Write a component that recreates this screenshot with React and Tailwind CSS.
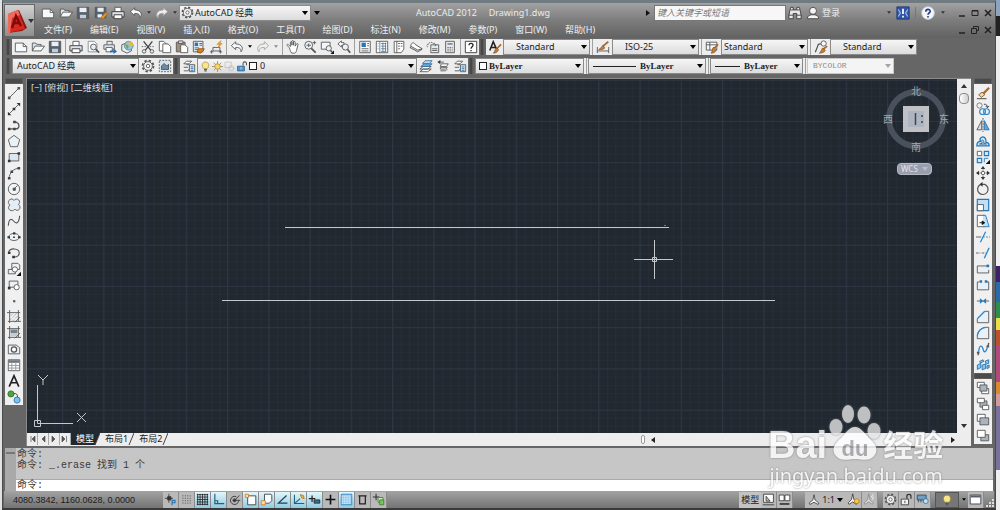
import React, { useState } from "react";

const icons = {
  new: (
    <>
      <path d="M1.5 3.5h9l4 4v6h-13z" fill="#f7fafd" />
      <path d="M10.5 3.5v4h4" />
    </>
  ),
  open: (
    <>
      <path d="M1.5 12.5v-9h4l1 1.500h5v2" fill="#dde6ee" />
      <path d="M1.500 12.500l3-5.500h11l-4 5.500z" fill="#f4f8fb" />
    </>
  ),
  save: (
    <>
      <path d="M1.500 1.500h13v13h-13z" fill="#56616e" />
      <path d="M4 2h8v5H4z" fill="#e9eff5" stroke="none" />
      <path d="M4.500 10h7v4h-7z" fill="#c3cdd8" stroke="none" />
    </>
  ),
  saveas: (
    <>
      <path d="M1.500 1.500h12v12h-12z" fill="#56616e" />
      <path d="M4 2h7v4.500H4zM4 9.500h5v3.500H4z" fill="#e9eff5" stroke="none" />
      <path d="M14 7l-5 5-1 3 3-1 4-5z" fill="#f0a030" stroke="#b06a10" />
    </>
  ),
  print: (
    <>
      <path d="M4.500 6V1.500h7V6" fill="#fff" />
      <path d="M1 6.500h14v6H1z" fill="#dfe3e7" stroke="#333" />
      <path d="M3.500 10h9v4.500h-9z" fill="#fff" stroke="#333" />
    </>
  ),
  undo: <path d="M6.500 2L1.500 6.500 6.500 11V8.500c5 0 6 1.500 6 5 3-3 2-9-6-9z" fill="#f8fafb" />,
  redo: (
    <path d="M9.500 2L14.500 6.500 9.500 11V8.500c-5 0-6 1.500-6 5-3-3-2-9 6-9z" fill="#eee" stroke="#a2a2a2" />
  ),
  preview: (
    <>
      <path d="M2.500 1.500h7l3 3v9h-10z" fill="#f7fafd" stroke="#888" />
      <circle cx="8.500" cy="8" r="3.300" fill="#e3eef7" />
      <path d="M11 10.500l4 4" strokeWidth="2" />
    </>
  ),
  publish: (
    <>
      <path d="M4.500 5V1.500h6V5M1 5.500h12v5H1z" fill="#e4e8ec" />
      <path d="M3.500 8.500h7v5h-7z" fill="#fff" />
      <path d="M8 12h4V9.500l4 3.500-4 3V14H8z" fill="#1f6db5" stroke="none" />
    </>
  ),
  globe: (
    <>
      <path d="M2 5.500L8 3l5 2.500v7L8 15l-6-3z" fill="#e9eef2" />
      <circle cx="10" cy="6.500" r="5" fill="#8cc6e6" stroke="#77808a" />
      <path d="M10 1.500c3 0 5 2 5 5l-5 1z" fill="#e8b93c" stroke="none" />
      <path d="M6 4l4 3-2 4z" fill="#6da84c" stroke="none" />
    </>
  ),
  cut: (
    <>
      <path d="M3 1.500l8 10M13 1.500l-8 10" stroke="#444" strokeWidth="1.500" />
      <circle cx="3.500" cy="13" r="2" />
      <circle cx="12.500" cy="13" r="2" />
      <path d="M1 7.500h14" strokeDasharray="1.500 1.500" />
    </>
  ),
  copy: (
    <>
      <path d="M1.500 1.500h5l3 3v8h-8z" fill="#fff" />
      <path d="M5.500 4.500h6l3 3v7h-9z" fill="#fff" />
    </>
  ),
  paste: (
    <>
      <path d="M1.500 2.500h10v11h-10z" fill="#a08f78" />
      <path d="M4 1h5v3H4z" fill="#ddd" />
      <path d="M6.500 5.500h5l3 3v6h-8z" fill="#fff" />
    </>
  ),
  match: (
    <>
      <path d="M1.500 1.500h11v12h-11z" fill="#e8f0f7" />
      <path d="M3 3h4v4H3z" fill="#2976b6" stroke="none" />
      <path d="M8.500 4h3M8.500 6h3M3 9h5M3 11h4" />
      <path d="M7 10h7l-1 2-3 3-4-1z" fill="#d8821f" stroke="#8d5213" />
    </>
  ),
  block: (
    <>
      <path d="M4.500 8.500h8v4h-8z" fill="#e7edf2" />
      <path d="M1 13.500h4M3 11.500v4M11 13.500h4M13 11.500v4" />
      <path d="M13 1l-4 4h3l-2 4 5-5h-3l2-3z" fill="#f5a623" stroke="#c47e12" strokeWidth="0.600" />
    </>
  ),
  hand: (
    <path
      d="M4 9L1.500 6.500c-1-2 1-2 2-.5L5 7.500V3c0-1.500 1.700-1.500 1.700 0v3-4.500c0-1.300 1.800-1.300 1.800 0V6l.3-3.500c.2-1.300 1.800-1 1.700.3L10.500 7l1.500-2.500c.8-1 2.200-.4 1.700.8L12 12c-.5 2-1 2.500-2 3H6.500C5 13 4.500 11 4 9z"
      fill="#fff"
    />
  ),
  zoomrt: (
    <>
      <circle cx="6.500" cy="6" r="4.500" fill="#e8f1f8" />
      <path d="M9.500 9.500l5 5" strokeWidth="2" />
      <path d="M4 6h5M6.500 4v4M11 3h4M13 1v4" />
    </>
  ),
  zoomwin: (
    <>
      <path d="M1.500 2.500h10v8h-10z" fill="#f3f7fa" />
      <circle cx="10" cy="9.500" r="3" fill="#e8f1f8" />
      <path d="M12 12l2 2" strokeWidth="2" />
      <path d="M16 12v4h-4z" fill="#111" stroke="none" />
    </>
  ),
  zoomprev: (
    <>
      <path d="M5 1L1 4.500 5 8V6h3V3H5z" fill="#fff" />
      <circle cx="9.500" cy="8" r="3.500" fill="#e8f1f8" />
      <path d="M12 10.500l3 4" strokeWidth="2" />
    </>
  ),
  props: (
    <>
      <path d="M2 1.500h12v13H2z" fill="#fff" />
      <path d="M4 3h5v5H4z" fill="#2976b6" stroke="none" />
      <path d="M10.500 4h2M10.500 6.500h2M4 10h8M4 12.500h8" />
    </>
  ),
  design: (
    <>
      <path d="M1.500 1.500h13v13h-13z" fill="#fff" />
      <path d="M5.500 1.500v13M7 4h6M7 7h6M7 10h6M7 13h6M9 3v10M12 3v10M3 4h1M3 7h1M3 10h1" stroke="#5d7c98" />
    </>
  ),
  palette: (
    <>
      <path d="M2.500 1.500h11v9l-3 4h-8z" fill="#fff" />
      <path d="M5.500 1.500v13M7 4h2M10 4h2M7 7h2M10 7h2M7 10h2" />
    </>
  ),
  sheet: (
    <>
      <path d="M1 8.500l9 5 5-3-9-5z" fill="#cfd7de" />
      <path d="M2 7c0-4 4-5 5-2l8 5-5 1.500z" fill="#fff" />
    </>
  ),
  markup: (
    <>
      <path d="M5.500 5.500h9v9h-9z" fill="#e5ebf0" />
      <path d="M2 8c-2-1-1-4 1-3 0-3 4-3 5-1 3-1 4 2 2 4" strokeDasharray="2 1" />
      <path d="M7 10h6M7 12h6" />
    </>
  ),
  calc: (
    <>
      <path d="M3 1.500h10v13H3z" fill="#e8ecef" />
      <path d="M5 3.500h6v2H5z" fill="#808b95" stroke="none" />
      <path d="M5 8.500h6M5 10.500h6M5 12.500h6" strokeDasharray="1.500 1" />
    </>
  ),
  help: (
    <>
      <path d="M1.500 1.500h13v13h-13z" fill="#fff" stroke="#333" />
      <path d="M5.700 6c0-3 4.600-3 4.600 0C10.300 7.500 8 8 8 10M8 11.300v1.500" stroke="#222" strokeWidth="1.500" />
    </>
  ),
  textstyle: (
    <>
      <path d="M2 12L6 2l4 9M3.500 8.500h5" stroke="#222" strokeWidth="1.800" />
      <path d="M15 5l-5 5" stroke="#a9682d" strokeWidth="2" />
      <path d="M10 9l2 2c-1 3-3 4-6 4 2-1 1-4 4-6z" fill="#c77a34" stroke="#7a4b20" strokeWidth="0.700" />
    </>
  ),
  dimstyle: (
    <>
      <path d="M1.500 8v7M14.500 8v7M1.500 12.500h13" />
      <path d="M14 2L8 7" stroke="#a9682d" strokeWidth="2" />
      <path d="M8 6l2 3c-1 2-4 2-7 2 2-1 3-3 5-5z" fill="#c77a34" stroke="#7a4b20" strokeWidth="0.700" />
    </>
  ),
  tablestyle: (
    <>
      <path d="M1.500 2.500h12v9h-12zM1.500 5.500h12M5.500 2.500v9" fill="#f6f8fa" />
      <path d="M15 5l-5 5" stroke="#a9682d" strokeWidth="2" />
      <path d="M10 8l3 3c-1 3-3 4-6 4 2-1 0-5 3-7z" fill="#c77a34" stroke="#7a4b20" strokeWidth="0.700" />
    </>
  ),
  leader: (
    <>
      <path d="M1.500 14L5 5l4-1" strokeWidth="1.400" />
      <circle cx="11" cy="4" r="3" fill="#f6f8fa" />
      <path d="M15 7l-5 4" stroke="#a9682d" strokeWidth="2" />
      <path d="M10 9l3 3c-1 2-4 3-7 3 2-1 2-4 4-6z" fill="#c77a34" stroke="#7a4b20" strokeWidth="0.700" />
    </>
  ),
  gear: (
    <>
      <circle cx="8" cy="8" r="6.300" strokeWidth="2" strokeDasharray="2.700 2.250" />
      <circle cx="8" cy="8" r="5" fill="#f3f3f3" />
      <circle cx="8" cy="8" r="2" fill="#fff" />
    </>
  ),
  geardash: (
    <>
      <path d="M1.500 1.500h13v13h-13z" strokeDasharray="2 1.500" fill="#d5e2ec" />
      <path d="M4 12V8l3-3 3 3 2-2v6z" fill="#6c8aa3" />
    </>
  ),
  layers: (
    <>
      <path d="M5 2.500h6l-3 3H2zM5 6.500h3M2 9.500h5M2 13.500h5l1-2" fill="#fff" />
      <path d="M8.500 6.500h6v8h-6z" fill="#d8e6f2" />
      <path d="M10 9h3M10 11h3M10 13h3" stroke="#2976b6" />
    </>
  ),
  layerprev: (
    <>
      <path d="M1 14.500l4-3h9l-4 3zM1 11.500l4-3h9l-4 3z" fill="#fff" />
      <path d="M2 8.500l4-3h9l-4 3z" fill="#6cb0e0" stroke="#2f6da0" />
      <path d="M4 5l3-3h8l-3 3z" fill="#d4e7f5" stroke="#2f6da0" />
    </>
  ),
  layerback: (
    <>
      <path d="M6 5.500h8l-2 3H5zM5 9.500h8l-2 2H5zM5 13.500h6l2-2" fill="#fff" />
      <path d="M5 1L1.500 3.500 5 6z" fill="#333" stroke="none" />
      <path d="M4 3.500h5" />
    </>
  ),
  bulb: (
    <>
      <path d="M5.500 11C2 8 2.500 1.500 8 1.500S14 8 10.500 11z" fill="#fbe58b" stroke="#9b8740" />
      <path d="M6 12.500h4M6.500 14.500h3" strokeWidth="1.600" />
    </>
  ),
  sun: (
    <>
      <path d="M8 0v16M0 8h16M2.500 2.500l11 11M13.500 2.500l-11 11" stroke="#8c7c45" />
      <circle cx="8" cy="8" r="4" fill="#fbd75c" stroke="#9b8330" />
    </>
  ),
  vpfreeze: (
    <>
      <path d="M1.500 1.500h9v8h-9z" stroke="#bbb" />
      <circle cx="10.500" cy="10.500" r="3.500" stroke="#c2c2c2" strokeWidth="2" strokeDasharray="2 1" />
    </>
  ),
  unlock: (
    <>
      <path d="M9.500 7V3.500c0-3 5-3 5 0V6" strokeWidth="1.500" />
      <path d="M1.500 7.500h10v7h-10z" fill="#4c95cf" stroke="#235a87" />
      <path d="M6.500 9v3" stroke="#fff" />
    </>
  ),
  binoculars: (
    <>
      <path d="M3 1.500h3v3h4v-3h3l2 9v4h-5v-6H6v6H1v-4z" fill="#e9e9e9" stroke="#3a3a3a" />
      <path d="M1 10.500h5M10 10.500h5M3 4.500h3M10 4.500h3" stroke="#3a3a3a" />
    </>
  ),
  user: (
    <>
      <path d="M1.500 14.500c0-3 2-4 5-4.500h3c3 .5 5 1.500 5 4.500z" fill="#f5f5f5" stroke="#444" />
      <circle cx="8" cy="5.500" r="4" fill="#f5f5f5" stroke="#444" />
    </>
  ),
  exchange: (
    <>
      <path d="M1 1h14v14H1z" fill="#2f56a5" stroke="#1d3a78" />
      <path d="M2.500 4l2.500 4-2.500 4M13.500 4L11 8l2.500 4" stroke="#9fb6e6" strokeWidth="1.500" />
      <path d="M8 3v6M8 11v2" stroke="#fff" strokeWidth="2" />
    </>
  ),
  helpround: (
    <>
      <circle cx="8" cy="8" r="7.300" fill="#f6f6f6" stroke="#b9c4d8" />
      <path d="M5.500 6.500c0-3.500 5-3.500 5-.5C10.500 8 8 8 8 10M8 11.500V13" stroke="#24418f" strokeWidth="1.900" />
    </>
  ),
  line: (
    <>
      <path d="M2.500 13.500l11-11" />
      <path d="M1 12h3v3H1zM12 1h3v3h-3z" fill="#555" stroke="none" />
    </>
  ),
  xline: (
    <>
      <path d="M2 14L14 2" />
      <path d="M1 11v4h4zM15 5V1h-4zM6.500 6.500h3v3h-3z" fill="#333" stroke="none" />
    </>
  ),
  pline: (
    <>
      <path d="M2 12.500h8c5 0 5-7-1-8" strokeWidth="1.500" />
      <path d="M1 11h3v3H1zM7 11h3v3H7zM7 3h3v3H7z" fill="#444" stroke="none" />
    </>
  ),
  polygon: <path d="M8 1.500l6.500 5-2.500 8H4L1.500 6.500z" fill="#eaf2f8" />,
  rect: (
    <>
      <path d="M2.500 4h11v8.500h-11z" fill="#dbe8f2" />
      <path d="M1 11h3v3H1zM12 2.500h3v3h-3z" fill="#333" stroke="none" />
    </>
  ),
  arc: (
    <>
      <path d="M2.500 14c0-6 5-11 11-11.500" />
      <path d="M1 12.500h3v3H1zM4 5h3v3H4zM12 1h3v3h-3z" fill="#444" stroke="none" />
    </>
  ),
  circle: (
    <>
      <circle cx="8" cy="8" r="6.500" fill="#f0f5f9" />
      <path d="M8 8l4-4M7 7h2.500v2.500H7z" fill="#444" />
    </>
  ),
  cloud: (
    <path
      d="M3 2c2-1.500 4-1 5 .8 1-2 4-2 5.500-.5 1.500 1.500 1 4-.5 5.200 2 1 2.500 4 1 5.500s-4 1.500-5-.3c-1.500 2-4 2.500-6 1-2-1.500-1.500-4.500.5-5.700C1 7 1 3.500 3 2z"
      fill="#e5eef5"
    />
  ),
  spline: <path d="M1.500 13.500C2 5 5 5 7.500 8s6 4 7-6" strokeWidth="1.300" />,
  ellipse: (
    <>
      <ellipse cx="8" cy="8" rx="6" ry="4" fill="#eef4f8" />
      <path d="M0.500 7h3v2.500h-3zM12.500 7h3v2.500h-3zM7 2.500h2.500V5H7zM7 7.500h2V9H7z" fill="#333" stroke="none" />
    </>
  ),
  ellarc: (
    <>
      <path d="M2 7c1-5 12-5 12 1 0 3-3 5-6 4.500" strokeWidth="1.300" />
      <path d="M1 6.500h3V9H1zM6 11h3v3H6z" fill="#333" stroke="none" />
    </>
  ),
  insert: (
    <>
      <path d="M5.500 1.500h7l2 2v5h-9zM1.500 8.500h8v5h-8z" fill="#eaf1f6" />
      <circle cx="9" cy="8.500" r="3" fill="#fff" />
      <path d="M16 11v5h-5z" fill="#111" stroke="none" />
    </>
  ),
  makeblock: (
    <>
      <path d="M2.500 3.500h10v7h-10z" fill="#eaf1f6" />
      <circle cx="11" cy="10.500" r="3" fill="#fff" />
      <path d="M1 10h3v3H1z" fill="#333" stroke="none" />
    </>
  ),
  point: <path d="M7 7h2.500v2.500H7z" fill="#555" stroke="none" />,
  hatch: (
    <>
      <path d="M3 0v15M13 0v13M0 3h15M1 13h15" />
      <path d="M4 7l3-3M4 11l8-8M7 12l5-5" stroke="#6c8aa3" strokeDasharray="1 1" />
      <path d="M9 14l6-6" />
    </>
  ),
  gradient: (
    <>
      <path d="M3 0v15M13 0v13M0 3h15M1 13h15" />
      <path d="M4 4h8v4H4z" fill="#77828c" stroke="none" />
      <path d="M4 8h8v4H4z" fill="#c3ccd3" stroke="none" />
      <path d="M9 14l6-6" />
    </>
  ),
  region: (
    <>
      <path d="M1.500 3.500h9l4 3v7h-13z" fill="#eaf1f6" />
      <circle cx="8" cy="8.500" r="3" fill="#fff" strokeWidth="1.400" />
    </>
  ),
  table: (
    <>
      <path d="M1.500 2h13v12.500h-13z" fill="#fff" />
      <path d="M2 2.500h12v3H2z" fill="#6c7681" stroke="none" />
      <path d="M1.500 8.500h13M1.500 11.500h13M5.500 5.500v9M10 5.500v9" stroke="#8a94a0" />
    </>
  ),
  mtext: <path d="M2.500 14.500L8 2l5.500 12.500M4.500 10h7" stroke="#222" strokeWidth="1.900" />,
  addsel: (
    <>
      <circle cx="4.500" cy="4.500" r="3.500" fill="#4da33d" stroke="#2f7524" />
      <circle cx="11.500" cy="11.500" r="3.500" fill="#7fc0ee" stroke="#2878b5" />
      <path d="M8 4c3 0 4 1 4 4" stroke="#333" />
    </>
  ),
  erase: (
    <>
      <path d="M15 2L8 9" stroke="#b06a28" strokeWidth="2.500" />
      <path d="M7 7l3 3-4 3-3-3z" fill="#f1d6a8" stroke="#7d5a30" />
      <path d="M1 14.500h11" stroke="#333" />
    </>
  ),
  copyobj: (
    <>
      <circle cx="4" cy="4" r="3" stroke="#777" />
      <circle cx="7.500" cy="11" r="3.300" stroke="#2b86cc" strokeWidth="1.300" />
      <circle cx="12" cy="11" r="3.300" stroke="#2b86cc" strokeWidth="1.300" />
      <path d="M9 2.500c3 0 4 1 4 4M11 4.500l2 2 2-2" stroke="#333" />
    </>
  ),
  mirror: (
    <>
      <path d="M6.500 3v10.500H1z" fill="#d8dde2" />
      <path d="M9.500 3v10.500H15z" fill="#5aa9e0" stroke="#2b6ea8" />
      <path d="M8 0v16" stroke="#444" strokeDasharray="2 1" />
    </>
  ),
  offset: (
    <>
      <path
        d="M1 13.500h14c0-3-2-4-3.500-4C12 5 9 2 6 4 4 5 4.500 7 5 8.500 2 8.500 1 11 1 13.500z"
        fill="#d2e7f6"
        stroke="#2577b8"
        strokeWidth="1.500"
      />
      <path d="M4 11.500h8c-1-1-2-.5-3-1 0-3-1-4-2-3.500s0 2 0 3.500z" stroke="#2b5f8d" />
    </>
  ),
  array: (
    <>
      <path d="M1.500 1.500h5v5h-5z" stroke="#555" fill="#fff" />
      <path d="M9.500 1.500h5v5h-5zM1.500 9.500h5v5h-5z" fill="#d2e7f6" stroke="#2577b8" strokeWidth="1.300" />
      <path d="M9.500 14V9.500H14" stroke="#2577b8" />
      <path d="M16 11v5h-5z" fill="#111" stroke="none" />
    </>
  ),
  move: (
    <>
      <path d="M8 2v12M2 8h12" strokeDasharray="2 1" />
      <path d="M8 0l2.500 3.500h-5zM8 16l2.500-3.500h-5zM0 8l3.500-2.500v5zM16 8l-3.500-2.500v5z" fill="#333" stroke="none" />
      <circle cx="8" cy="8" r="2" fill="#fff" />
    </>
  ),
  rotate: (
    <>
      <path d="M5 3a6 6 0 1 0 5-.3H6" strokeWidth="1.400" />
      <path d="M7.500 0v5.500L4 2.700z" fill="#333" stroke="none" />
    </>
  ),
  scale: (
    <>
      <path d="M1.500 1.500h13v13h-13z" fill="#bfe0f6" stroke="#2577b8" strokeWidth="1.300" />
      <path d="M1.500 7.500h7v7h-7z" fill="#fff" />
    </>
  ),
  stretch: (
    <>
      <path d="M1.500 1.500h8v13h-8z" fill="#fff" />
      <path d="M8 1.500h3l4 13H8" fill="#bfe0f6" stroke="#2577b8" />
      <path d="M4 10h5M7 8l3 2-3 2z" fill="#111" stroke="#111" />
    </>
  ),
  trim: (
    <>
      <path d="M0 8h6" stroke="#555" />
      <path d="M8 8h8" stroke="#2577b8" strokeDasharray="2 1.500" />
      <path d="M5 14L11 2" stroke="#2b86cc" strokeWidth="1.500" />
    </>
  ),
  extend: (
    <>
      <path d="M0 8h5M6.500 8H11" strokeDasharray="3 1" />
      <path d="M9.500 14L15 2" stroke="#2b86cc" strokeWidth="1.500" />
    </>
  ),
  breakpt: (
    <>
      <path d="M14.500 4.500h-13v8h13V9" fill="#eaf1f6" />
      <path d="M12 3h3v3h-3z" fill="#2577b8" stroke="none" />
    </>
  ),
  break: (
    <>
      <path d="M3.500 4.500h-2v9h13v-9h-2" fill="#eaf1f6" />
      <path d="M4 2.500h3v3H4zM10 2.500h3v3h-3z" fill="#2577b8" stroke="none" />
    </>
  ),
  join: (
    <>
      <path d="M1 8h14" stroke="#555" />
      <path d="M5 5.500L7.500 8 5 10.500zM11 5.500L8.500 8l2.500 2.500z" fill="#2577b8" stroke="#2577b8" />
    </>
  ),
  chamfer: (
    <>
      <path d="M1.500 10v4.500h13v-13H10" fill="#eaf1f6" />
      <path d="M1.500 10L10 1.500" stroke="#2b86cc" strokeWidth="1.500" />
    </>
  ),
  fillet: (
    <>
      <path d="M1.500 11v3.500h13v-13H11C6 2 2 6 1.500 11z" fill="#eaf1f6" />
      <path d="M1.500 11C2 6 6 2 11 1.500" stroke="#2b86cc" strokeWidth="1.500" />
    </>
  ),
  blend: (
    <>
      <path d="M3 11c1-9 4-7 5-3s3 5 5-2" stroke="#2b86cc" strokeWidth="1.500" />
      <path d="M2.500 15v-4M13.500 6l1-5" strokeWidth="1.500" />
      <path d="M1 11h3v2H1zM12 4h3v2h-3z" fill="#555" stroke="none" />
    </>
  ),
  explode: (
    <path
      d="M1.500 8l4-2v5l-4 2zM7 8l4-1v5l-4 1.500zM4 4l4-2 1 2-4 1.500zM10.500 3.500l4-1.500v4l-3 1zM12.500 9l2.500-1v3l-2.500 1z"
      fill="#8cc6ee"
      stroke="#2070ad"
    />
  ),
  front: (
    <>
      <path d="M1.500 1.500h8v6h-8zM6.500 8.500h8v6h-8z" fill="#fff" />
      <path d="M4.500 4.500h8v7h-8z" fill="#aab4be" />
    </>
  ),
  back: (
    <>
      <path d="M4.500 4.500h8v7h-8z" fill="#aab4be" />
      <path d="M1.500 1.500h8v5h-8zM7.500 9.500h7v5h-7z" fill="#fff" />
    </>
  ),
  above: (
    <>
      <path d="M1.500 1.500h9v8h-9z" fill="#fff" />
      <path d="M4.500 5.500h10v8h-10z" fill="#aab4be" />
    </>
  ),
  under: (
    <>
      <path d="M5.500 6.500h9v7h-9z" fill="#aab4be" />
      <path d="M1.500 1.500h9v8h-9z" fill="#fff" />
    </>
  ),
  infer: (
    <>
      <path d="M6 1v11M1 6.500h10M4.500 4.500h4v4h-4z" fill="#444" stroke="#333" />
      <path d="M10 15V9h3.500v3H10" stroke="#2577b8" strokeWidth="1.500" />
    </>
  ),
  snap: (
    <path d="M3 3.500h9M3 6.500h9M3 9.500h9M3 12.500h10M12.500 3v9" stroke="#333" strokeDasharray="1.200 1.800" />
  ),
  grid: (
    <path d="M2 1v14M5 1v14M8 1v14M11 1v14M14 1v14M1 2h14M1 5h14M1 8h14M1 11h14M1 14h14" stroke="#222" />
  ),
  ortho: <path d="M3.500 1v12H15M3.500 9.500H7V13" stroke="#235f78" strokeWidth="1.400" />,
  polar: (
    <>
      <path d="M13 10a5 5 0 1 1-3-5.500" stroke="#222" />
      <path d="M8 9h7M8 9l6-6" stroke="#222" />
      <circle cx="8" cy="9" r="2" fill="#333" />
    </>
  ),
  osnap: (
    <>
      <path d="M4.500 3.500h10v11h-10z" fill="#fafdff" stroke="#333" />
      <path d="M1.500 1.500h4v4h-4z" fill="#ffd9b0" stroke="#d8781c" />
    </>
  ),
  osnap3d: (
    <>
      <path d="M5.500 1.500h8l1 1v7l-3 3h-6z" fill="#fafdff" stroke="#333" />
      <path d="M1.500 9.500h5v5h-5z" fill="#ffd9b0" stroke="#d8781c" />
    </>
  ),
  otrack: <path d="M13 3L3 12.500h11" stroke="#1b4356" strokeWidth="1.500" />,
  ducs: (
    <>
      <path d="M3 2v11h12M3 13l7-6" stroke="#235f78" strokeWidth="1.300" />
      <path d="M10 2l4 1 1 4-3-1z" fill="#f2b632" stroke="#b27a10" />
    </>
  ),
  dyn: (
    <>
      <path d="M5 3v8M1 7h8" stroke="#222" strokeWidth="1.500" />
      <path d="M7.500 8.500h7v4h-7z" fill="#3b6f88" stroke="#222" />
    </>
  ),
  plus: <path d="M8 2v12M2 8h12" stroke="#111" strokeWidth="2" />,
  tpy: (
    <>
      <path d="M1.500 1.500h13v13h-13z" fill="#9fd0f0" stroke="#2577b8" />
      <path d="M2 4h12M2 7h12M2 10h12M2 13h12" stroke="#e8f5fc" strokeDasharray="1.500 1.500" />
    </>
  ),
  qp: <path d="M4.500 3.500h7v10h-7zM3 3.500h10" stroke="#222" strokeWidth="1.500" />,
  cycle: (
    <>
      <path d="M5 1v8M1 5h8" stroke="#333" strokeWidth="1.300" />
      <path d="M7.500 5.500h6v6h-6z" fill="#cfe6c7" stroke="#3d7a2c" />
      <path d="M9.500 8.500h5v6h-5z" fill="#7cc35f" stroke="#3d7a2c" />
    </>
  ),
  layout: (
    <>
      <path d="M2 1.500h12v10H2z" fill="#fff" stroke="#333" />
      <path d="M5 10V4l5 6z" fill="#bbb" stroke="#333" />
      <path d="M1 14.500h14" stroke="#333" />
    </>
  ),
  views: (
    <>
      <path d="M1.500 2.500h6v7h-6zM8.500 2.500h6v7h-6z" fill="#fff" stroke="#333" />
      <path d="M2 13.500h12" stroke="#333" strokeWidth="2" />
    </>
  ),
  anno: <path d="M8 1l1.500 7 5 4-1 2L8 11l-5.500 3-1-2 5-4z" fill="#f3f3f3" stroke="#333" />,
  annovis: (
    <>
      <path d="M7 1l1.500 7 4 4-1 2L7 11l-4.500 3-1-2 4-4z" fill="#f3f3f3" stroke="#333" />
      <circle cx="12" cy="10" r="3" fill="#f7c948" stroke="#b27a10" />
    </>
  ),
  annoauto: (
    <>
      <path d="M7 1l1.500 7 4 4-1 2L7 11l-4.500 3-1-2 4-4z" fill="#d2d2d2" stroke="#888" />
      <path d="M13 1l-3 4h3l-2 4" stroke="#eee" />
    </>
  ),
  padlock: (
    <>
      <path d="M8.500 7V4c0-3 5-3 5 0v3" stroke="#333" strokeWidth="1.500" />
      <path d="M1.500 7.500h9v7h-9z" fill="#f1f1f1" stroke="#333" />
      <path d="M6 9.500v3" stroke="#333" />
    </>
  ),
  hardware: (
    <>
      <path d="M1.500 2.500h11v6h-11z" fill="#6f9ec0" stroke="#345" />
      <path d="M3 8.500v3M6 8.500v3M9 8.500v3" stroke="#345" />
      <circle cx="12" cy="10" r="3" fill="#bfe0f6" stroke="#2577b8" />
    </>
  ),
  clean: (
    <>
      <path d="M1.500 2.500h13v11h-13z" fill="#fff" stroke="#334" />
      <path d="M2 3h12v2.500H2z" fill="#56616e" stroke="none" />
    </>
  ),
};

const Icon = ({ name, className = "w-[14px] h-[14px]" }) => (
  <svg viewBox="0 0 16 16" fill="none" stroke="#555" className={`shrink-0 ${className}`}>
    {icons[name]}
  </svg>
);

const Tool = ({ name, className = "w-[17px] h-4" }) => (
  <button type="button" aria-label={name} className={`flex items-center justify-center shrink-0 ${className}`}>
    <Icon name={name} />
  </button>
);

const Arrow = ({ className = "text-black" }) => (
  <svg viewBox="0 0 6 4" className={`w-[6px] h-1 shrink-0 ${className}`}>
    <path d="M0 0h6L3 4z" fill="currentColor" />
  </svg>
);

const ArrowButton = ({ name, className }) => (
  <button type="button" aria-label={name} className="flex items-center justify-center w-[9px] h-4 shrink-0">
    <svg viewBox="0 0 6 4" className={`w-1 h-[3px] ${className}`}>
      <path d="M0 0h6L3 4z" fill="currentColor" />
    </svg>
  </button>
);

const Sep = () => (
  <span className="w-1 h-4 flex justify-center shrink-0">
    <span className="w-px bg-[#a0a0a0]"></span>
  </span>
);

const Grip = () => <span className="w-1 h-4 mx-px bg-[#474747] border-x border-[#5a5a5a] shrink-0"></span>;

const Combo = ({ label, value, width, children, pad = "pl-1", font = "text-[9px]", disabled }) => (
  <label
    className={`flex items-center h-4 pr-[2px] border shrink-0 ${width} ${
      disabled ? "bg-[#f4f4f4] border-[#c9c9c9]" : "bg-linear-to-b from-[#f6f6f6] to-[#dcdcdc] border-[#8a8a8a]"
    }`}
  >
    {children}
    <select
      aria-label={label}
      disabled={disabled}
      className={`appearance-none bg-transparent outline-none flex-1 min-w-0 leading-[14px] ${pad} ${font} ${
        disabled ? "text-[#8c8c8c]" : "text-[#1c1c1c]"
      }`}
    >
      <option>{value}</option>
    </select>
    <Arrow className={disabled ? "text-[#a5a5a5]" : "text-black"} />
  </label>
);

const menus = [
  "文件(F)",
  "编辑(E)",
  "视图(V)",
  "插入(I)",
  "格式(O)",
  "工具(T)",
  "绘图(D)",
  "标注(N)",
  "修改(M)",
  "参数(P)",
  "窗口(W)",
  "帮助(H)",
];

const drawTools = [
  "line", "xline", "pline", "polygon", "rect", "arc", "circle", "cloud", "spline", "ellipse",
  "ellarc", "insert", "makeblock", "point", "hatch", "gradient", "region", "table", "mtext", "addsel",
];

const modifyTools = [
  "erase", "copyobj", "mirror", "offset", "array", "move", "rotate", "scale", "stretch",
  "trim", "extend", "breakpt", "break", "join", "chamfer", "fillet", "blend", "explode",
];

const orderTools = ["front", "back", "above", "under"];

const modes = [
  ["infer", false], ["snap", false], ["grid", true], ["ortho", true], ["polar", false],
  ["osnap", true], ["osnap3d", true], ["otrack", true], ["ducs", true], ["dyn", true],
  ["plus", false], ["tpy", true], ["qp", false], ["cycle", false],
];

const WindowButtons = ({ restore }) => (
  <div className="flex">
    <button type="button" aria-label="minimize" className="w-[13px] flex justify-center">
      <svg viewBox="0 0 8 8" className="w-2 h-2"><path d="M1 7h6" stroke="#222" strokeWidth="1.500" /></svg>
    </button>
    <button type="button" aria-label="maximize" className="w-[13px] flex justify-center">
      <svg viewBox="0 0 8 8" className="w-2 h-2" fill="none" stroke="#222">
        {restore ? <path d="M2.500 2.500v-2h5v4h-2M.5 2.500h5v5h-5z" /> : <path d="M1 1.500h6v5H1zM1 2h6" />}
      </svg>
    </button>
    <button type="button" aria-label="close" className="w-[13px] flex justify-center">
      <svg viewBox="0 0 8 8" className="w-2 h-2"><path d="M1 1l6 6M7 1L1 7" stroke="#222" strokeWidth="1.600" /></svg>
    </button>
  </div>
);

const Header = () => (
  <header className="flex h-[35px] shrink-0 pl-px pr-px bg-linear-to-b from-[#a2a2a2] via-[#7c7c7c] to-[#626262]">
    <button
      type="button"
      aria-label="application menu"
      className="flex items-center justify-center w-[31px] h-[33px] mt-px border border-[#666] bg-linear-to-b from-[#d2d2d2] to-[#8e8e8e] shrink-0"
    >
      <svg viewBox="0 0 22 26" className="w-[22px] h-[26px]">
        <path d="M3 6l10-4 8 18-5 3-14 2z" fill="#8c1616" />
        <path d="M2 6L12 2l7 19-17 4z" fill="#d8281f" />
        <path d="M2 6L12 2l2 5-8 3-2 15-2 0z" fill="#ef6a5c" />
        <path d="M6 20l4-12 5 10M8 15h5" fill="none" stroke="#7c0d0d" strokeWidth="2.500" />
      </svg>
      <Arrow className="text-[#333]" />
    </button>

    <div className="flex-1 min-w-0 flex flex-col">
      {/* quick access, title and search */}
      <div className="flex items-center h-[19px]">
        <div className="flex items-center w-[285px] shrink-0 pl-1">
          <Tool name="new" className="w-[18px] h-4" />
          <Tool name="open" className="w-[17px] h-4" />
          <Tool name="save" className="w-[18px] h-4" />
          <Tool name="saveas" className="w-[17px] h-4" />
          <Tool name="print" className="w-[18px] h-4" />
          <Tool name="undo" />
          <ArrowButton name="undo list" className="text-[#333]" />
          <Tool name="redo" />
          <ArrowButton name="redo list" className="text-[#333]" />
          <Combo label="workspace" value="AutoCAD 经典" width="w-[132px]" pad="pl-px">
            <Icon name="gear" className="w-[13px] h-[13px] ml-px" />
          </Combo>
          <button type="button" aria-label="customize" className="pl-[3px]">
            <Arrow />
          </button>
        </div>
        <h1 className="flex-1 text-center whitespace-pre text-[9px] leading-4 text-[#ececec]">
          {"AutoCAD 2012     Drawing1.dwg"}
        </h1>
        <div className="flex items-center shrink-0">
          <svg viewBox="0 0 4 6" className="w-1 h-[6px] mr-1"><path d="M0 0l4 3-4 3z" fill="#111" /></svg>
          <input
            type="text"
            aria-label="search"
            placeholder="键入关键字或短语"
            className="w-[132px] h-4 pl-[2px] text-[9px] italic bg-[#f7f7f7] border border-[#777] outline-none placeholder:text-[#777]"
          />
          <Tool name="binoculars" className="w-[18px] h-4" />
          <Tool name="user" className="w-[18px] h-4" />
          <button type="button" className="text-[9px] leading-4 text-[#f0f0f0]">
            登录
          </button>
          <div className="w-11"></div>
          <ArrowButton name="account list" className="text-[#333]" />
          <Tool name="exchange" className="w-5 h-4" />
          <span className="w-px h-3 mx-[2px] bg-[#777]"></span>
          <Tool name="helpround" className="w-5 h-4" />
          <ArrowButton name="help list" className="text-[#333]" />
          <div className="w-2"></div>
          <WindowButtons />
        </div>
      </div>
      {/* menu bar */}
      <div className="flex items-center justify-between h-4 pl-[9px]">
        <nav className="flex gap-[18px]">
          {menus.map((menu) => (
            <button type="button" key={menu} className="text-[9px] leading-4 whitespace-nowrap text-[#efefef]">
              {menu}
            </button>
          ))}
        </nav>
        <WindowButtons restore />
      </div>
    </div>
  </header>
);

const lineFont = "text-[9px] font-bold font-['Liberation_Serif',serif]";

const Toolbars = () => (
  <div className="shrink-0 bg-[#666] pl-[2px]">
    <div className="flex items-center h-[17px]">
      <Grip />
      <div className="flex items-center bg-[#ededed] h-4 ml-px">
        {["new", "open", "save"].map((n) => <Tool key={n} name={n} />)}
        <Sep />
        {["print", "preview", "publish", "globe"].map((n) => <Tool key={n} name={n} />)}
        <Sep />
        {["cut", "copy", "paste", "match", "block"].map((n) => <Tool key={n} name={n} />)}
        <Sep />
        <Tool name="undo" />
        <ArrowButton name="undo list" className="text-black" />
        <Tool name="redo" />
        <ArrowButton name="redo list" className="text-[#888]" />
        <Sep />
        {["hand", "zoomrt", "zoomwin", "zoomprev"].map((n) => <Tool key={n} name={n} />)}
        <Sep />
        {["props", "design", "palette", "sheet", "markup", "calc"].map((n) => <Tool key={n} name={n} />)}
        <Sep />
        <Tool name="help" />
      </div>
      <Grip />
      <div className="flex items-center bg-[#ededed] h-4 ml-px">
        <Tool name="textstyle" />
        <Combo label="text style" value="Standard" width="w-[87px]" pad="pl-3" />
        <Sep />
        <Tool name="dimstyle" className="w-[18px] h-4" />
        <Combo label="dimension style" value="ISO-25" width="w-[87px]" pad="pl-3" />
        <Sep />
        <Tool name="tablestyle" className="w-[18px] h-4" />
        <Combo label="table style" value="Standard" width="w-[87px]" pad="pl-[2px]" />
        <Sep />
        <Tool name="leader" className="w-[18px] h-4" />
        <Combo label="leader style" value="Standard" width="w-[87px]" pad="pl-3" />
      </div>
    </div>

    <div className="flex items-center h-[18px] mt-[2px] mb-[3px]">
      <Grip />
      <div className="flex items-center bg-[#ededed] h-4 ml-px">
        <Combo label="workspace" value="AutoCAD 经典" width="w-[127px]" />
        <Tool name="gear" />
        <Tool name="geardash" />
      </div>
      <Grip />
      <div className="flex items-center bg-[#ededed] h-4 ml-px">
        <Tool name="layers" />
        <Combo label="layer" value="0" width="w-[220px]" pad="pl-[3px]">
          <span className="flex items-center gap-px pl-[2px]">
            <Icon name="bulb" className="w-[11px] h-[11px]" />
            <Icon name="sun" className="w-[11px] h-[11px]" />
            <Icon name="vpfreeze" className="w-[11px] h-[11px]" />
            <Icon name="unlock" className="w-3 h-[11px]" />
            <span className="w-2 h-2 border border-[#222] bg-white"></span>
          </span>
        </Combo>
        <Tool name="layerprev" />
        <Tool name="layerback" />
        <Tool name="layers" />
      </div>
      <Grip />
      <div className="flex items-center bg-[#ededed] h-4 ml-px">
        <Combo label="color" value="ByLayer" width="w-[109px]" pad="pl-[2px]" font={lineFont}>
          <span className="w-2 h-2 ml-[3px] border border-[#222] bg-white"></span>
        </Combo>
        <Sep />
        <Combo label="linetype" value="ByLayer" width="w-[118px]" pad="pl-1" font={lineFont}>
          <span className="w-[43px] h-px ml-1 bg-[#222]"></span>
        </Combo>
        <Sep />
        <Combo label="lineweight" value="ByLayer" width="w-[93px]" pad="pl-1" font={lineFont}>
          <span className="w-[25px] h-px ml-1 bg-[#222]"></span>
        </Combo>
        <Sep />
        <Combo
          label="plot style"
          value="BYCOLOR"
          width="w-[87px]"
          pad="pl-[5px]"
          font="text-[8px] font-['Liberation_Mono',monospace]"
          disabled
        />
      </div>
    </div>
  </div>
);

const SideBar = ({ tools }) => (
  <>
    <div className="h-[6px] bg-[#4a4a4a] border border-[#5c5c5c]"></div>
    <div className="flex flex-col items-center bg-[#f0f0f0] pt-px">
      {tools.map((t) => (
        <Tool key={t} name={t} className="w-4 h-4" />
      ))}
    </div>
  </>
);

const Canvas = () => (
  <div className="relative flex-1 min-w-0 min-h-0 overflow-hidden bg-[#212830]">
    <svg className="absolute inset-0 w-full h-full">
      <defs>
        <pattern id="minor" x="35.500" y="0.700" width="8.250" height="8.250" patternUnits="userSpaceOnUse">
          <path d="M0 .5h8.250M.5 0v8.250" stroke="#252d37" fill="none" />
        </pattern>
        <pattern id="major" x="35" y="0.700" width="41.250" height="41.250" patternUnits="userSpaceOnUse">
          <path d="M0 .5h41.250M.5 0v41.250" stroke="#2d3643" fill="none" />
        </pattern>
      </defs>
      <rect width="100%" height="100%" fill="url(#minor)" />
      <rect width="100%" height="100%" fill="url(#major)" />
      <g stroke="#c4c8cc" fill="none">
        <path d="M258 148.500h384" />
        <path d="M637 146.500h2" stroke="#777" />
        <path d="M195 221.500h553" />
        <path d="M607 180.500h39M627.500 161v39" />
        <path d="M625.500 178.500h4v4h-4z" />
      </g>
    </svg>

    <p className="absolute left-1 top-[3px] text-[9px] leading-3 text-[#dcdcdc]">[−] [俯视] [二维线框]</p>

    {/* UCS icon */}
    <svg viewBox="0 0 56 56" className="absolute left-[6px] bottom-[3px] w-14 h-14" fill="none" stroke="#c4c8cc">
      <path d="M1.500 46.500h6v6h-6zM4.500 49.500V11M4.500 49.500H40" />
      <path d="M5 1l5 5 5-5M10 6v5M44 39l9 9M53 39l-9 9" />
    </svg>

    {/* view cube */}
    <div className="absolute right-2 top-[6px] w-[66px] text-[10px] leading-3 text-[#a3a7ab]">
      <svg viewBox="0 0 66 68" className="w-[66px] h-[68px]">
        <circle cx="33" cy="34" r="27" fill="none" stroke="#49515c" strokeWidth="6" />
        <path d="M20 21h26v26H20z" fill="#bfc1c4" />
        <path d="M25 26h16v16H25z" fill="#aeb4c0" />
        <path d="M32.500 28v12M38 31h2M38 37h2" stroke="#3c4656" strokeWidth="1.500" />
      </svg>
      <span className="absolute left-7 top-0">北</span>
      <span className="absolute left-0 top-7">西</span>
      <span className="absolute right-0 top-7">东</span>
      <span className="absolute left-7 bottom-0">南</span>
    </div>
    <button
      type="button"
      className="absolute right-[25px] top-[84px] flex items-center gap-1 w-[35px] h-3 pl-[3px] rounded-sm border border-[#b5b8c2] bg-[#9a9ead] text-[8px] leading-3 text-[#e2e4ea]"
    >
      WCS <Arrow className="text-[#b9bdc9]" />
    </button>
  </div>
);

const Tab = ({ label, active, onClick }) => (
  <button
    type="button"
    onClick={onClick}
    className={`flex items-center h-3 pl-[5px] text-[9px] leading-3 ${active ? "bg-[#212830] text-white" : "text-[#222]"}`}
  >
    {label}
    <svg viewBox="0 0 6 12" className="w-[6px] h-3">
      <path d="M1 12L6 0v12z" fill={active ? "#ededed" : "none"} />
      <path d="M1 12L6 0" stroke="#444" />
    </svg>
  </button>
);

const Drawing = () => {
  const [tab, setTab] = useState("模型");

  return (
    <div className="flex-1 min-w-0 flex flex-col border-t border-l border-[#8b8b8b]">
      <div className="flex-1 min-h-0 flex">
        <Canvas />
        <div className="w-[14px] shrink-0 flex flex-col items-center justify-between bg-[#ededed] py-[5px]">
          <div className="flex flex-col items-center gap-[5px]">
            <svg viewBox="0 0 6 4" className="w-[6px] h-1"><path d="M0 4h6L3 0z" fill="#333" /></svg>
            <span className="w-[10px] h-[11px] rounded-sm border border-[#8c8c8c] bg-linear-to-r from-white to-[#cfcfcf]"></span>
          </div>
          <Arrow className="text-[#333]" />
        </div>
      </div>
      <div className="flex h-[13px] shrink-0 bg-[#ededed]">
        <div className="flex flex-1">
          {["M3 1v6M7 1L4 4l3 3z", "M6 1L3 4l3 3z", "M2 1l3 3-3 3z", "M1 1l3 3-3 3zM5.500 1v6"].map((d) => (
            <button
              type="button"
              key={d}
              aria-label="tab scroll"
              className="w-[11px] h-3 flex items-center justify-center border-r border-[#aaa]"
            >
              <svg viewBox="0 0 8 8" className="w-2 h-2"><path d={d} fill="#555" stroke="#555" strokeWidth="0.700" /></svg>
            </button>
          ))}
          {["模型", "布局1", "布局2"].map((t) => (
            <Tab key={t} label={t} active={tab === t} onClick={() => setTab(t)} />
          ))}
        </div>
        <div className="flex items-center justify-between w-[35%] pr-4">
          <div className="flex items-center gap-[6px]">
            <span className="w-1 h-[9px] rounded-sm border border-[#999] bg-white"></span>
            <svg viewBox="0 0 4 6" className="w-1 h-[6px]"><path d="M4 0L0 3l4 3z" fill="#222" /></svg>
          </div>
          <svg viewBox="0 0 4 6" className="w-1 h-[6px]"><path d="M0 0l4 3-4 3z" fill="#222" /></svg>
        </div>
      </div>
    </div>
  );
};

const CommandLine = () => (
  <section className="flex shrink-0 h-[43px] mx-[2px] bg-[#c6c6c6] font-['Liberation_Mono','Noto_Sans_CJK_SC',monospace] text-[10px] text-[#3a3a3a]">
    <div className="w-[11px] bg-[#a9a9a9] pt-1">
      <div className="h-[2px] mx-px bg-[#777]"></div>
    </div>
    <div className="flex-1 flex flex-col">
      <div className="flex-1 pl-px leading-[11px] whitespace-pre overflow-hidden pt-px">
        <p>命令:</p>
        <p>命令: _.erase 找到 1 个</p>
      </div>
      <label className="flex items-center h-3 pl-px bg-white border-t border-[#aaa] leading-3">
        命令:
        <input type="text" aria-label="command" className="flex-1 h-[10px] ml-1 outline-none bg-transparent" />
      </label>
    </div>
  </section>
);

const StatusTool = ({ name, active }) => (
  <button
    type="button"
    aria-label={name}
    className={`flex items-center justify-center w-4 h-4 border-r border-[#8a8a8a] ${
      active ? "bg-linear-to-b from-[#e2f5fb] to-[#8fcbe2]" : "bg-[#b9b9b9]"
    }`}
  >
    <Icon name={name} className="w-[13px] h-[13px]" />
  </button>
);

const StatusBar = () => (
  <footer className="flex items-center shrink-0 h-[17px] pl-[9px] mx-px bg-linear-to-b from-[#a3a3a3] to-[#747474]">
    <p className="w-[150px] font-['Liberation_Sans',sans-serif] text-[9px] leading-4 text-[#1b1b1b]">
      4080.3842, 1160.0628, 0.0000
    </p>
    <div className="flex">
      {modes.map(([name, active]) => (
        <StatusTool key={name} name={name} active={active} />
      ))}
    </div>
    <div className="flex-1"></div>
    <div className="flex">
      <button type="button" className="w-[22px] h-4 bg-[#c3c3c3] text-[9px] leading-4 text-[#222]">
        模型
      </button>
      <StatusTool name="layout" />
      <StatusTool name="views" />
    </div>
    <button
      type="button"
      className="flex items-center gap-[2px] h-4 ml-3 px-[3px] bg-[#b9b9b9] text-[9px] leading-4 text-[#222]"
    >
      <Icon name="anno" className="w-3 h-3" />
      1:1
      <Arrow />
    </button>
    <StatusTool name="annovis" />
    <StatusTool name="annoauto" />
    <div className="flex ml-[5px]">
      <StatusTool name="gear" />
      <StatusTool name="padlock" />
      <StatusTool name="hardware" />
    </div>
    <button
      type="button"
      aria-label="isolate objects"
      className="flex items-center justify-center w-6 h-4 ml-1 bg-[#777] border border-[#555]"
    >
      <Icon name="bulb" className="w-3 h-3" />
    </button>
    <ArrowButton name="status menu" className="text-black" />
    <StatusTool name="clean" />
    <svg viewBox="0 0 10 10" className="w-[10px] h-[10px] mt-1">
      <path d="M8 2h2v2H8zM5 5h2v2H5zM8 5h2v2H8zM2 8h2v2H2zM5 8h2v2H5zM8 8h2v2H8z" fill="#ddd" />
    </svg>
  </footer>
);

const Watermark = () => (
  <div className="absolute right-[51px] bottom-5 w-[176px] pointer-events-none text-white opacity-80 drop-shadow-[0_0_1px_#777]">
    <div className="flex items-end font-['Liberation_Sans','Noto_Sans_CJK_SC',sans-serif] font-bold">
      <span className="text-[38px] leading-[38px]">Bai</span>
      <svg viewBox="0 0 54 62" className="w-[54px] h-[62px] mx-px shrink-0">
        <g fill="#e4e5e6">
          <ellipse cx="8" cy="25" rx="6.500" ry="8" />
          <ellipse cx="20" cy="12" rx="6" ry="9" />
          <ellipse cx="36" cy="13" rx="6.500" ry="8.500" />
          <ellipse cx="46" cy="29" rx="6.500" ry="8" />
        </g>
        <path
          d="M27 25c6 0 9 6 14 11 7 6 10 12 5 18-5 6-12 3-19 3s-14 3-19-3c-5-6-2-12 5-18 5-5 8-11 14-11z"
          fill="currentColor"
        />
        <text x="27" y="54" textAnchor="middle" fontSize="22" fill="#a2a4a8">du</text>
      </svg>
      <span className="text-[30px] leading-[36px] whitespace-nowrap">经验</span>
    </div>
    <p className="font-['Noto_Sans',sans-serif] text-[20px] leading-6 text-center whitespace-nowrap">jingyan.baidu.com</p>
  </div>
);

const edge = [
  "h-4 bg-[#8ea3c0]",
  "h-5 bg-[#222]",
  "flex-1 bg-[#eeeeee]",
  "h-4 bg-[#3c2263]",
  "h-5 bg-[#2c6aa5]",
  "h-4 bg-[#2f8c4a]",
  "h-3 bg-[#e8e046]",
  "h-4 bg-[#b8532c]",
  "h-9 bg-[#b04a7c]",
  "h-3 bg-[#d88a2c]",
  "h-3 bg-[#d49a9a]",
  "h-16 bg-[#78719e]",
  "h-10 bg-[#eeeeee]",
];

const App = () => {
  return (
    <div className="flex h-screen overflow-hidden bg-[#dfe3e6] font-['Noto_Sans','Noto_Sans_CJK_SC',sans-serif]">
      <div className="relative flex-1 min-w-0 flex flex-col ml-[2px] border-t-[3px] border-t-[#6f7b80] border-x border-x-[#4b4b4b] border-b-2 border-b-[#3a3a3a] bg-[#666]">
        <Header />
        <Toolbars />
        <main className="flex-1 min-h-0 flex gap-[3px] pl-[2px] pr-[3px]">
          <aside className="w-[18px] shrink-0">
            <SideBar tools={drawTools} />
          </aside>
          <Drawing />
          <aside className="w-[18px] shrink-0">
            <SideBar tools={modifyTools} />
            <SideBar tools={orderTools} />
          </aside>
        </main>
        <div className="h-[2px] shrink-0"></div>
        <CommandLine />
        <StatusBar />
        <Watermark />
      </div>
      <div className="w-1 flex flex-col shrink-0">
        {edge.map((c, i) => (
          <div key={i} className={c}></div>
        ))}
      </div>
    </div>
  );
};

export default App;
